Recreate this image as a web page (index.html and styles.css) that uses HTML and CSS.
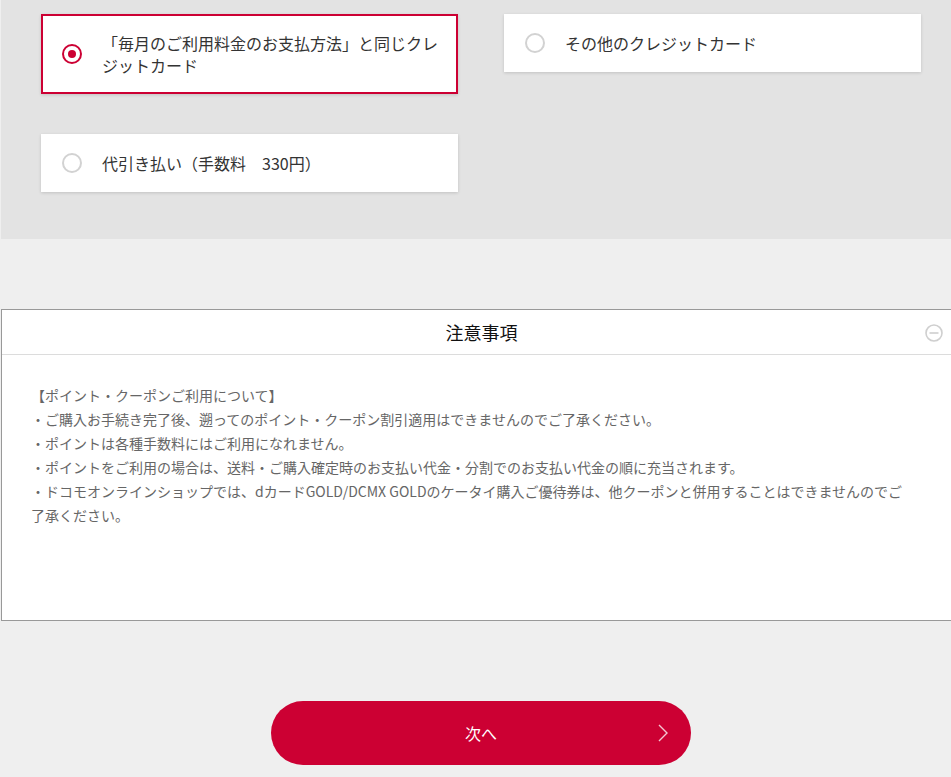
FILE: index.html
```html
<!DOCTYPE html>
<html lang="ja">
<head>
    <meta charset="UTF-8">
    <meta name="viewport" content="width=device-width, initial-scale=1.0">
    <title>お支払方法</title>
    <link rel="stylesheet" href="styles.css">
</head>
<body>
    <div class="page">
        <div class="pay-panel">
            <div class="pay-options">
                <label class="pay-card selected">
                    <span class="radio"></span>
                    <span class="pay-label">「毎月のご利用料金のお支払方法」と同じクレジットカード</span>
                </label>
                <label class="pay-card">
                    <span class="radio"></span>
                    <span class="pay-label">その他のクレジットカード</span>
                </label>
                <label class="pay-card">
                    <span class="radio"></span>
                    <span class="pay-label">代引き払い（手数料　330円）</span>
                </label>
            </div>
        </div>

        <div class="notice">
            <div class="notice-head">
                <h2 class="notice-title">注意事項</h2>
                <svg class="notice-toggle" width="18" height="18" viewBox="0 0 18 18">
                    <circle cx="9" cy="9" r="8" fill="none" stroke="#cfcfcf" stroke-width="1.6"/>
                    <line x1="4.5" y1="9" x2="13.5" y2="9" stroke="#cfcfcf" stroke-width="1.6"/>
                </svg>
            </div>
            <div class="notice-body">
                <p>【ポイント・クーポンご利用について】</p>
                <p>・ご購入お手続き完了後、遡ってのポイント・クーポン割引適用はできませんのでご了承ください。</p>
                <p>・ポイントは各種手数料にはご利用になれません。</p>
                <p>・ポイントをご利用の場合は、送料・ご購入確定時のお支払い代金・分割でのお支払い代金の順に充当されます。</p>
                <p>・ドコモオンラインショップでは、dカードGOLD/DCMX GOLDのケータイ購入ご優待券は、他クーポンと併用することはできませんのでご了承ください。</p>
            </div>
        </div>

        <div class="next-wrap">
            <button class="next-button">
                次へ
                <svg class="next-arrow" width="12" height="20" viewBox="0 0 12 20">
                    <polyline points="2,2 10,10 2,18" fill="none" stroke="#f4c6d1" stroke-width="1.4"/>
                </svg>
            </button>
        </div>
    </div>
</body>
</html>
```

FILE: styles.css
```css
html, body {
    margin: 0;
    padding: 0;
}
body {
    background-color: #efefef;
    font-family: "Noto Sans CJK JP", "Noto Sans", sans-serif;
    color: #333;
    overflow-x: hidden;
}
.page {
    width: 960px;
    margin-left: 1px;
}
.pay-panel {
    background-color: #e3e3e3;
    padding: 14px 40px 47px;
}
.pay-options {
    display: grid;
    grid-template-columns: 417px 417px;
    column-gap: 46px;
    row-gap: 40px;
    align-items: start;
}
.pay-card {
    display: flex;
    align-items: center;
    background: white;
    border: 2px solid white;
    padding: 16px 8px 16px 19px;
    box-shadow: 0 1px 3px rgba(0, 0, 0, 0.15);
    font-size: 16px;
    line-height: 22px;
    cursor: pointer;
}
.pay-card.selected {
    border-color: #cc0033;
}
.radio {
    flex: none;
    width: 16px;
    height: 16px;
    border: 2px solid #d2d2d2;
    border-radius: 50%;
    margin-right: 20px;
    position: relative;
}
.selected .radio {
    border-color: #cc0033;
}
.selected .radio::after {
    content: "";
    position: absolute;
    top: 4px;
    left: 4px;
    width: 8px;
    height: 8px;
    border-radius: 50%;
    background: #cc0033;
}
.pay-label {
    color: #333;
}

.notice {
    margin-top: 70px;
    background: white;
    border: 1px solid #999;
    border-right: none;
}
.notice-head {
    position: relative;
    height: 44px;
    border-bottom: 1px solid #dcdcdc;
    display: flex;
    align-items: center;
    justify-content: center;
}
.notice-title {
    margin: 0;
    font-size: 18px;
    font-weight: normal;
    color: #111;
}
.notice-toggle {
    position: absolute;
    right: 18px;
    top: 14px;
}
.notice-body {
    padding: 28px 48px 93px 29px;
    font-size: 14px;
    line-height: 24px;
    color: #666;
}
.notice-body p {
    margin: 0;
}

.next-wrap {
    display: flex;
    justify-content: center;
    padding: 80px 0 40px;
}
.next-button {
    position: relative;
    width: 420px;
    height: 64px;
    border: none;
    border-radius: 32px;
    background-color: #cc0033;
    color: white;
    font-family: inherit;
    font-size: 16px;
    cursor: pointer;
}
.next-arrow {
    position: absolute;
    right: 22px;
    top: 22px;
}
```
